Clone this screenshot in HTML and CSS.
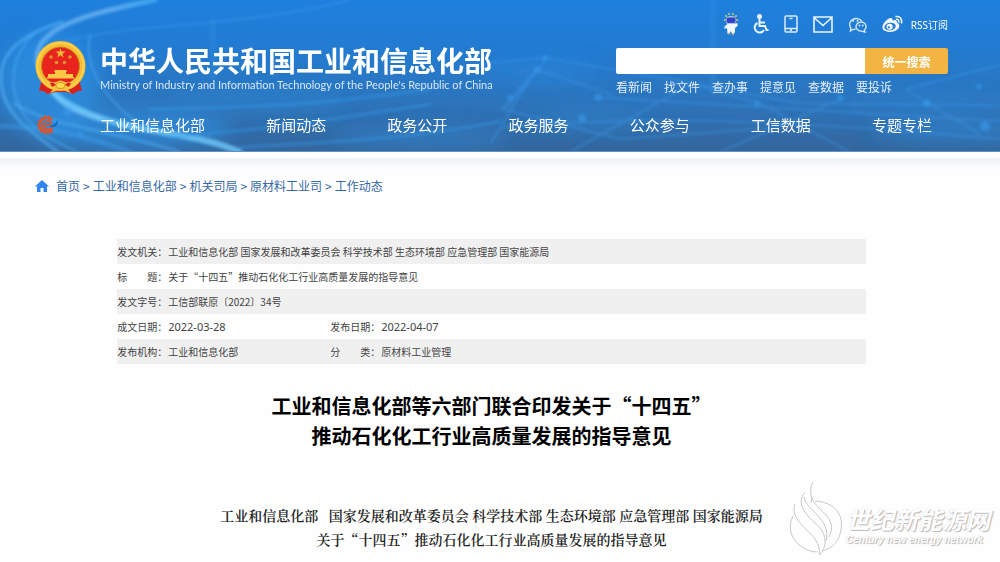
FILE: index.html
```html
<!DOCTYPE html>
<html lang="zh-CN">
<head>
<meta charset="utf-8">
<meta name="viewport" content="width=device-width, initial-scale=1">
<title>工业和信息化部</title>
<link rel="stylesheet" href="styles.css">
</head>
<body>
<header class="site-header">
  <svg class="header-art" viewBox="0 0 1000 152" preserveAspectRatio="none" aria-hidden="true">
    <defs>
      <filter id="soft" x="-20%" y="-20%" width="140%" height="140%"><feGaussianBlur stdDeviation="1.500"/></filter>
      <filter id="glow" x="-50%" y="-50%" width="200%" height="200%"><feGaussianBlur stdDeviation="10"/></filter>
      <linearGradient id="tail" x1="0" x2="1"><stop offset="0" stop-color="#7cc0fb"/><stop offset=".6" stop-color="#8cc8fb"/><stop offset="1" stop-color="#4fc0f5"/></linearGradient>
    </defs>
    <g filter="url(#glow)" fill="#2f94e8">
      <ellipse cx="50" cy="85" rx="50" ry="50" opacity=".6"/>
      <ellipse cx="130" cy="130" rx="100" ry="20" opacity=".6"/>
      <ellipse cx="420" cy="140" rx="90" ry="8" opacity=".5"/>
      <ellipse cx="260" cy="100" rx="90" ry="10" opacity=".3"/>
      <ellipse cx="950" cy="132" rx="80" ry="8" opacity=".55"/>
      <ellipse cx="930" cy="105" rx="90" ry="6" opacity=".4"/>
      <ellipse cx="540" cy="72" rx="60" ry="8" opacity=".4"/>
      <ellipse cx="590" cy="120" rx="60" ry="10" opacity=".3"/>
    </g>
    <g fill="none" filter="url(#soft)" stroke-linecap="round">
      <path d="M155 0C95 12 62 22 46 38S38 75 54 94S78 112 100 120" stroke="url(#tail)" stroke-width="5" opacity=".6"/>
      <path d="M54 94C75 112 110 124 150 131S215 142 240 153" stroke="#6fcbfb" stroke-width="6" opacity=".8"/>
      <path d="M62 22C25 34 0 50 1 80S20 125 58 153" stroke="#55b8fa" stroke-width="3" opacity=".6"/>
      <path d="M36 32C10 55 8 88 22 112S55 142 78 153" stroke="#4daef5" stroke-width="2" opacity=".6"/>
      <path d="M14 104C50 128 110 130 180 153" stroke="#4fb6f7" stroke-width="3" opacity=".5"/>
      <path d="M90 35C85 60 95 90 135 122" stroke="#55b0f5" stroke-width="2" opacity=".5"/>
      <path d="M62 42C140 22 240 28 350 0" stroke="#48a3f0" stroke-width="2" opacity=".4"/>
      <path d="M0 127C50 128 80 135 130 153" stroke="#3ba5f5" stroke-width="5" opacity=".4"/>
      <path d="M150 110C270 108 330 104 430 90M170 138C290 128 330 120 430 105M240 148C330 144 420 138 500 122" stroke="#379df0" stroke-width="3" opacity=".45"/>
    </g>
    <g fill="none" stroke="#3e9cec" filter="url(#soft)" opacity=".45">
      <path d="M475 65L545 58L660 78L800 104L1000 106M500 112L536 70L612 95M600 98L1000 122M536 70L490 145M690 85L570 153M675 80L760 104L850 153M845 98L720 153M905 90L1000 65M905 90L980 135M500 128C650 116 780 120 1000 140M545 62L505 110L620 140L780 128" stroke-width="2"/>
      <path d="M713 0V95M213 20V80" stroke-width="6" opacity=".5"/>
    </g>
    <g fill="#3aa2f5" filter="url(#soft)" opacity=".5">
      <circle cx="545" cy="59" r="3"/><circle cx="537" cy="70" r="3"/><circle cx="510" cy="98" r="3"/><circle cx="598" cy="98" r="4"/><circle cx="582" cy="119" r="4"/><circle cx="757" cy="104" r="3"/><circle cx="840" cy="98" r="3"/><circle cx="927" cy="104" r="4"/><circle cx="979" cy="87" r="3"/><circle cx="985" cy="127" r="5"/><circle cx="68" cy="112" r="4"/><circle cx="80" cy="135" r="3"/>
    </g>
  </svg>

  <div class="header-inner">
    <div class="masthead">
      <div class="brand">
        <svg class="emblem" viewBox="0 0 51 54" role="img" aria-label="国徽">
          <path d="M7 38L4 50Q9 49 12 53L20 51H31L39 53Q42 49 47 50L44 38Z" fill="#d9211d"/>
          <circle cx="25.500" cy="25" r="22" fill="#e9231e" stroke="#f5bd35" stroke-width="6"/>
          <circle cx="25.500" cy="25" r="19" fill="none" stroke="#c98a1b" stroke-width="1"/>
          <circle cx="25.500" cy="25" r="23" fill="none" stroke="#ffd04a" stroke-width="2"/>
          <path d="M25.500 7l1 3.500h4l-3 2.200 1.200 3.800-3.200-2.300-3.200 2.300 1.200-3.800-3-2.200h4z" fill="#f0b93a"/>
          <g fill="#d9962f"><circle cx="16" cy="16" r="1.800"/><circle cx="35" cy="16" r="1.800"/><circle cx="21.500" cy="21.500" r="1.800"/><circle cx="29.500" cy="21.500" r="1.800"/></g>
          <path d="M20 29h11l1 2h-1v2h7v3h1v1.500H12V36h1v-3h7v-2h-1z" fill="#fbc944"/>
          <path d="M9 36Q14 43 21 41Q25.500 38 30 41Q37 43 42 36L39 43L31 46L36 52L25.500 48L15 52L20 46L12 43Z" fill="#f7c440"/>
          <path d="M15 42Q19 41 21 44L17 46ZM36 42Q32 41 30 44L34 46Z" fill="#d9211d"/>
          <ellipse cx="25.500" cy="44.500" rx="4.500" ry="3" fill="#ffd84e" stroke="#d3901e"/>
        </svg>
        <div class="brand-text">
          <h1 class="brand-name">中华人民共和国工业和信息化部</h1>
          <p class="brand-sub">Ministry of Industry and Information Technology of the People's Republic of China</p>
        </div>
      </div>

      <div class="tools">
        <div class="icons">
          <a class="icon" href="#" aria-label="智能问答">
            <svg width="14" height="22" viewBox="0 0 14 22"><g fill="#c9cf5e"><circle cx="2" cy="3" r="1"/><circle cx="5" cy="1" r="1"/><circle cx="9" cy="1" r="1"/><circle cx="12" cy="3" r="1"/><circle cx="1" cy="7" r="1"/><circle cx="13" cy="7" r="1"/></g><rect x="2" y="3" width="10" height="9" rx="4" fill="#a9bff0"/><rect x="2.500" y="4.500" width="9" height="5.500" rx="2" fill="#3144c2"/><path d="M3.500 11h7l3-1v3l-2.500 2v4l-1.500 2h-1.500l-1-3-1.500 2.500h-2l-.500-5.500-2.500 1v-2.500z" fill="#f2f7ff"/><g fill="#e3c25a"><circle cx="4.500" cy="20.500" r="1"/><circle cx="9" cy="21" r="1"/></g></svg>
          </a>
          <a class="icon" href="#" aria-label="无障碍">
            <svg width="16" height="20" viewBox="0 0 16 20" fill="none" stroke="#eaf4ff" stroke-width="2"><circle cx="6.500" cy="2.500" r="1.500" fill="#eaf4ff"/><path d="M6.500 5v7h5.500l1.500 4h2M7 8.500h5"/><path d="M4.500 9A5 5 0 1 0 11 16"/></svg>
          </a>
          <a class="icon" href="#" aria-label="手机版">
            <svg width="14" height="18" viewBox="0 0 14 18" fill="none" stroke="#d9ebff" stroke-width="1.500"><rect x="1" y="1" width="12" height="16" rx="1"/><path d="M1 13.500h12M5.500 3.500h3M6 15.300h2"/></svg>
          </a>
          <a class="icon" href="#" aria-label="邮箱">
            <svg width="20" height="17" viewBox="0 0 20 17" fill="none" stroke="#eaf4ff" stroke-width="1.600"><path d="M1 1h18v15H1zM1 1.500l9 8 9-8"/></svg>
          </a>
          <a class="icon" href="#" aria-label="微信">
            <svg width="19" height="18" viewBox="0 0 20 18" fill="none" stroke="#d9ebff" stroke-width="1.400"><path d="M8 14.300L5 14.800 2.500 16.500 3 13.500A7 6.500 0 1 1 14.500 6"/><path d="M17 15.500A5.300 4.800 0 1 0 14 16.500L18 17.500Z"/><g fill="#d9ebff" stroke="none"><circle cx="5.500" cy="5.500" r="1"/><circle cx="10" cy="5.500" r="1"/><circle cx="12" cy="10.500" r="1"/><circle cx="15.500" cy="10.500" r="1"/></g></svg>
          </a>
          <a class="icon" href="#" aria-label="微博">
            <svg width="21" height="18" viewBox="0 0 22 18"><path d="M8 3C10 2 11.500 3 11 5.500C14 4.200 16 5 15.500 7.500C21 9.500 18 17 9 17.500C3 17.500 0 15 .500 12C1 8 5 4 8 3Z" fill="#f2f8ff"/><ellipse cx="8.500" cy="11.800" rx="6" ry="4" fill="#2b7fd3" transform="rotate(-8 8 12)"/><circle cx="8" cy="12" r="3.200" fill="#f2f8ff"/><circle cx="7.200" cy="12.600" r="1.200" fill="#2b7fd3"/><path d="M14.500 4Q18 3.500 17.500 7.500M14 1.200Q21.500 0 20.500 8.500" fill="none" stroke="#f2f8ff" stroke-width="1.600"/></svg>
          </a>
          <a class="rss" href="#">RSS订阅</a>
        </div>
        <form class="search">
          <input class="search-input" type="search" aria-label="搜索">
          <button class="search-button" type="button">统一搜索</button>
        </form>
        <div class="quick-links">
          <a href="#">看新闻</a><a href="#">找文件</a><a href="#">查办事</a><a href="#">提意见</a><a href="#">查数据</a><a href="#">要投诉</a>
        </div>
      </div>
    </div>

    <nav class="main-nav" aria-label="主导航">
      <a class="nav-logo" href="#" aria-label="网站标志">
        <svg width="24" height="20" viewBox="0 0 24 20" fill="none"><path d="M17.500 16.500A8.800 8.800 0 1 1 17.500 3.500" stroke="#d9532a" stroke-width="1.800" stroke-dasharray="2 1.900"/><path d="M17 14.500A7 7 0 1 1 16.500 4.800" stroke="#ea4f1c" stroke-width="2.400"/><path d="M7.500 10.500C12 12 17.500 9 15.500 6.800C12.500 4.800 8 7.500 8 11.500C9 15 14 14.500 18 12.800" stroke="#ea4f1c" stroke-width="1.600"/><path d="M14 11.500C18 11 21 8.500 22.500 5C24 9.500 20 13.500 14 11.500Z" fill="#1068b8"/></svg>
      </a>
      <ul class="nav-list">
        <li><a href="#">工业和信息化部</a></li>
        <li><a href="#">新闻动态</a></li>
        <li><a href="#">政务公开</a></li>
        <li><a href="#">政务服务</a></li>
        <li><a href="#">公众参与</a></li>
        <li><a href="#">工信数据</a></li>
        <li><a href="#">专题专栏</a></li>
      </ul>
    </nav>
  </div>
</header>
<div class="divider"></div>

<main class="page">
  <nav class="breadcrumb" aria-label="当前位置">
    <svg class="home" width="14" height="12" viewBox="0 0 14 12" aria-hidden="true"><path d="M7 0L14 6.500H12V12H8.500V8H5.500V12H2V6.500H0Z" fill="#2f86f2"/></svg>
    <a href="#">首页</a><span>&gt;</span><a href="#">工业和信息化部</a><span>&gt;</span><a href="#">机关司局</a><span>&gt;</span><a href="#">原材料工业司</a><span>&gt;</span><a href="#">工作动态</a>
  </nav>

  <table class="meta">
    <colgroup><col class="col-label"><col class="col-value"><col class="col-label"><col></colgroup>
    <tbody>
      <tr><th scope="row">发文机关：</th><td colspan="3">工业和信息化部 国家发展和改革委员会 科学技术部 生态环境部 应急管理部 国家能源局</td></tr>
      <tr><th scope="row">标　　题：</th><td colspan="3">关于“十四五”推动石化化工行业高质量发展的指导意见</td></tr>
      <tr><th scope="row">发文字号：</th><td colspan="3">工信部联原〔2022〕34号</td></tr>
      <tr><th scope="row">成文日期：</th><td class="date">2022-03-28</td><th scope="row">发布日期：</th><td class="date">2022-04-07</td></tr>
      <tr><th scope="row">发布机构：</th><td>工业和信息化部</td><th scope="row">分　　类：</th><td>原材料工业管理</td></tr>
    </tbody>
  </table>

  <article>
    <h2 class="doc-title">工业和信息化部等六部门联合印发关于“十四五”<br>推动石化化工行业高质量发展的指导意见</h2>
    <p class="doc-lead">
      <span class="agency-lead">工业和信息化部</span> 国家发展和改革委员会 科学技术部 生态环境部 应急管理部 国家能源局<br>关于“十四五”推动石化化工行业高质量发展的指导意见
    </p>
  </article>
</main>

<div class="watermark">
  <svg width="60" height="76" viewBox="0 0 60 76" fill="none" aria-hidden="true">
    <g stroke="#c8c8c8" stroke-width="1">
      <path d="M27 1C22 10 27 14 25 22M19 11C10 22 18 32 30 43C39 51 43 62 34 74"/>
      <path d="M9 23C4 38 20 46 29 58Q35 67 33 74"/>
      <path d="M18 16C20 30 46 38 40 60M26 16C27 28 54 36 43 56"/>
      <path d="M29 20C48 21 58 33 55 49S42 68 36 70M31 71C13 70 -2 53 7 35"/>
    </g>
  </svg>
  <div class="watermark-text">
    <span class="watermark-name">世纪新能源网</span>
    <span class="watermark-sub">Century new energy network</span>
  </div>
</div>
</body>
</html>
```
FILE: styles.css
```css
* { box-sizing: border-box; }

body {
  margin: 0;
  position: relative;
  background: #fefefe;
  color: #444;
  font-family: "Noto Sans CJK SC", "Noto Sans", sans-serif;
  font-size: 12px;
}

a { color: inherit; text-decoration: none; }
h1, h2, p, ul { margin: 0; padding: 0; }
svg { display: block; flex: none; }

/* Header */
.site-header {
  position: relative;
  overflow: hidden;
  background: linear-gradient(#1e80de 0%, #237bd0 35%, #2c75bd 65%, #34669d 100%);
  border-bottom: 1px solid #5f93c6;
  color: #fff;
}

.header-art {
  position: absolute;
  inset: 0;
  width: 100%;
  height: 100%;
}

.header-inner {
  position: relative;
  padding: 12px 52px 11px 35px;
}

.masthead {
  display: flex;
  justify-content: space-between;
  align-items: flex-end;
}

.brand {
  display: flex;
  align-items: center;
  gap: 14px;
  padding-bottom: 1px;
}

.emblem { width: 51px; height: 54px; }

.brand-name {
  font-size: 28px;
  line-height: 34px;
  font-weight: 700;
  white-space: nowrap;
}

.brand-sub {
  font-family: Lato, sans-serif;
  font-size: 11px;
  line-height: 16px;
  white-space: nowrap;
  color: #d5e6f8;
}

.tools { width: 332px; }

.icons {
  display: flex;
  justify-content: flex-end;
  align-items: center;
  gap: 15px;
  height: 24px;
}

.rss {
  font-family: "Noto Sans", "Noto Sans CJK SC", sans-serif;
  font-size: 10px;
  margin-left: -7px;
}

.search {
  display: flex;
  height: 26px;
  margin-top: 12px;
}

.search-input {
  flex: 1;
  min-width: 0;
  padding: 0 8px;
  border: 0;
  border-radius: 2px 0 0 2px;
  background: #fff;
  font: inherit;
}

.search-button {
  width: 83px;
  padding: 0;
  border: 0;
  border-radius: 0 2px 2px 0;
  background: #f2b544;
  color: #fff;
  font: inherit;
  font-weight: 700;
}

.quick-links {
  display: flex;
  gap: 12px;
  margin-top: 4px;
  line-height: 18px;
  color: #e4effb;
}

.main-nav {
  display: flex;
  align-items: center;
  gap: 14px;
  height: 30px;
  margin-top: 14px;
}

.nav-logo { width: 51px; }

.nav-list {
  flex: 1;
  display: flex;
  justify-content: space-between;
  padding-right: 16px;
  list-style: none;
  font-size: 15px;
  line-height: 30px;
}

.divider {
  height: 12px;
  margin-top: 6px;
  background: linear-gradient(#eef3f7, #fefefe);
}

/* Page */
.page { padding: 4px 52px 10px 35px; }

.breadcrumb {
  display: flex;
  align-items: center;
  gap: 3px;
  line-height: 24px;
  color: #3568a5;
}

.home { margin-right: 4px; }

.meta {
  width: 82%;
  margin: 41px auto 0;
  border-collapse: collapse;
  table-layout: fixed;
  font-size: 10px;
  line-height: 25px;
}

.col-label { width: 51px; }
.col-value { width: 162px; }

.meta th,
.meta td {
  padding: 0;
  text-align: left;
  font-weight: 400;
  white-space: nowrap;
}

.meta tr:nth-child(odd) { background: #f0f0f0; }

.meta .date {
  font-family: "Noto Sans", sans-serif;
  font-size: 11px;
}

.doc-title {
  margin-top: 27px;
  color: #000;
  font-size: 20px;
  line-height: 30px;
  font-weight: 700;
  text-align: center;
}

.doc-lead {
  margin-top: 52px;
  color: #222;
  font-family: "Noto Serif CJK SC", "Noto Sans CJK SC", serif;
  font-size: 14px;
  font-weight: 600;
  line-height: 24px;
  text-align: center;
}

.agency-lead { margin-right: 7px; }

/* Overlay mark in the lower right corner */
.watermark {
  position: absolute;
  right: 10px;
  bottom: 4px;
  display: flex;
  align-items: center;
  color: #fff;
  font-style: italic;
  font-weight: 700;
  text-shadow: 1px 1px 1px #b4b4b4, 0 0 1px #ccc;
  pointer-events: none;
}

.watermark-text {
  display: flex;
  flex-direction: column;
  padding-top: 12px;
}

.watermark-name { font-size: 24px; line-height: 30px; }

.watermark-sub {
  font-family: "Liberation Sans", sans-serif;
  font-size: 10px;
  line-height: 12px;
}
```
